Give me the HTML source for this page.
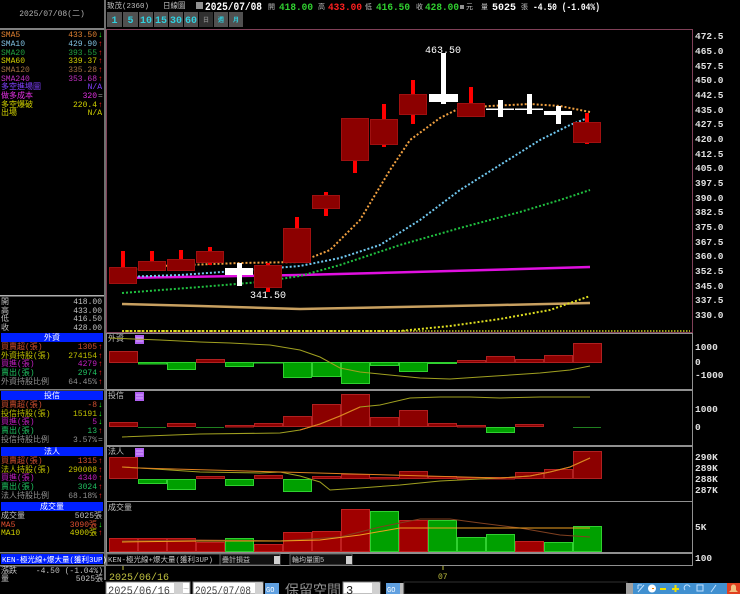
<!DOCTYPE html>
<html><head><meta charset="utf-8"><style>
html,body{margin:0;padding:0;background:#000;width:740px;height:594px;overflow:hidden}
svg{display:block}
text{font-family:"Liberation Mono","Noto Sans CJK TC",monospace}
.s{font-size:8px}
.ax{font-family:"Liberation Sans",sans-serif;font-size:9.5px;fill:#e0e0e0;font-weight:bold}
</style></head><body>
<svg width="740" height="594" viewBox="0 0 740 594" xmlns="http://www.w3.org/2000/svg">
<rect width="740" height="594" fill="#000"/>
<!-- left panel -->
<rect x="104" y="0" width="2" height="580" fill="#707070"/>
<rect x="0" y="28" width="104" height="2" fill="#808080"/>
<text x="52" y="16" class="s" fill="#b0b0b0" text-anchor="middle">2025/07/08(二)</text>
<g class="s">
<text x="1" y="37" fill="#e08030">SMA5</text><text x="97" y="37" fill="#e08030" text-anchor="end">433.50</text><text x="98" y="37" fill="#20ff20">↓</text>
<text x="1" y="46" fill="#80c0e0">SMA10</text><text x="97" y="46" fill="#80c0e0" text-anchor="end">429.90</text><text x="98" y="46" fill="#ff2020">↑</text>
<text x="1" y="55" fill="#20a040">SMA20</text><text x="97" y="55" fill="#20a040" text-anchor="end">393.55</text><text x="98" y="55" fill="#ff2020">↑</text>
<text x="1" y="63" fill="#d0d000">SMA60</text><text x="97" y="63" fill="#d0d000" text-anchor="end">339.37</text><text x="98" y="63" fill="#ff2020">↑</text>
<text x="1" y="72" fill="#a07040">SMA120</text><text x="97" y="72" fill="#a07040" text-anchor="end">335.28</text><text x="98" y="72" fill="#ff2020">↑</text>
<text x="1" y="81" fill="#c030c0">SMA240</text><text x="97" y="81" fill="#c030c0" text-anchor="end">353.68</text><text x="98" y="81" fill="#ff2020">↑</text>
<text x="1" y="89" fill="#8040ff">多空進場圖</text><text x="102" y="89" fill="#8040ff" text-anchor="end">N/A</text>
<text x="1" y="98" fill="#e030e0">做多成本</text><text x="97" y="98" fill="#e030e0" text-anchor="end">320</text><text x="98" y="98" fill="#909090">=</text>
<text x="1" y="107" fill="#d0d000">多空爆破</text><text x="97" y="107" fill="#d0d000" text-anchor="end">220.4</text><text x="98" y="107" fill="#ff2020">↑</text>
<text x="1" y="115" fill="#d0d000">出場</text><text x="102" y="115" fill="#d0d000" text-anchor="end">N/A</text>
</g>
<rect x="0" y="295" width="104" height="1.5" fill="#b0b0b0"/>
<g class="s" fill="#c0c0c0">
<text x="1" y="304">開</text><text x="102" y="304" text-anchor="end">418.00</text>
<text x="1" y="313">高</text><text x="102" y="313" text-anchor="end">433.00</text>
<text x="1" y="321">低</text><text x="102" y="321" text-anchor="end">416.50</text>
<text x="1" y="330">收</text><text x="102" y="330" text-anchor="end">428.00</text>
</g>
<g class="s">
<rect x="1" y="333" width="102" height="9" fill="#0020ff"/><text x="52" y="340" fill="#fff" text-anchor="middle">外資</text>
<text x="1" y="349" fill="#d05030">買賣超(張)</text><text x="97" y="349" fill="#d05030" text-anchor="end">1305</text><text x="98" y="349" fill="#ff2020">↑</text>
<text x="1" y="358" fill="#c0c000">外資持股(張)</text><text x="97" y="358" fill="#c0c000" text-anchor="end">274154</text><text x="98" y="358" fill="#ff2020">↑</text>
<text x="1" y="366" fill="#c020c0">買進(張)</text><text x="97" y="366" fill="#c020c0" text-anchor="end">4279</text><text x="98" y="366" fill="#ff2020">↑</text>
<text x="1" y="375" fill="#20c060">賣出(張)</text><text x="97" y="375" fill="#20c060" text-anchor="end">2974</text><text x="98" y="375" fill="#ff2020">↑</text>
<text x="1" y="384" fill="#909090">外資持股比例</text><text x="97" y="384" fill="#909090" text-anchor="end">64.45%</text><text x="98" y="384" fill="#ff2020">↑</text>
<rect x="0" y="389" width="104" height="1.5" fill="#808080"/>
<rect x="1" y="391" width="102" height="9" fill="#0020ff"/><text x="52" y="398" fill="#fff" text-anchor="middle">投信</text>
<text x="1" y="407" fill="#d05030">買賣超(張)</text><text x="97" y="407" fill="#d05030" text-anchor="end">-8</text><text x="98" y="407" fill="#20ff20">↓</text>
<text x="1" y="416" fill="#c0c000">投信持股(張)</text><text x="97" y="416" fill="#c0c000" text-anchor="end">15191</text><text x="98" y="416" fill="#20ff20">↓</text>
<text x="1" y="424" fill="#c020c0">買進(張)</text><text x="97" y="424" fill="#c020c0" text-anchor="end">5</text><text x="98" y="424" fill="#20ff20">↓</text>
<text x="1" y="433" fill="#20c060">賣出(張)</text><text x="97" y="433" fill="#20c060" text-anchor="end">13</text><text x="98" y="433" fill="#ff2020">↑</text>
<text x="1" y="442" fill="#909090">投信持股比例</text><text x="97" y="442" fill="#909090" text-anchor="end">3.57%</text><text x="98" y="442" fill="#909090">=</text>
<rect x="1" y="447" width="102" height="9" fill="#0020ff"/><text x="52" y="454" fill="#fff" text-anchor="middle">法人</text>
<text x="1" y="463" fill="#d05030">買賣超(張)</text><text x="97" y="463" fill="#d05030" text-anchor="end">1315</text><text x="98" y="463" fill="#ff2020">↑</text>
<text x="1" y="472" fill="#c0c000">法人持股(張)</text><text x="97" y="472" fill="#c0c000" text-anchor="end">290008</text><text x="98" y="472" fill="#ff2020">↑</text>
<text x="1" y="480" fill="#c020c0">買進(張)</text><text x="97" y="480" fill="#c020c0" text-anchor="end">4340</text><text x="98" y="480" fill="#ff2020">↑</text>
<text x="1" y="489" fill="#20c060">賣出(張)</text><text x="97" y="489" fill="#20c060" text-anchor="end">3024</text><text x="98" y="489" fill="#ff2020">↑</text>
<text x="1" y="498" fill="#909090">法人持股比例</text><text x="97" y="498" fill="#909090" text-anchor="end">68.18%</text><text x="98" y="498" fill="#ff2020">↑</text>
<rect x="1" y="502" width="102" height="9" fill="#0020ff"/><text x="52" y="509" fill="#fff" text-anchor="middle">成交量</text>
<text x="1" y="518" fill="#c0c0c0">成交量</text><text x="102" y="518" fill="#c0c0c0" text-anchor="end">5025張</text>
<text x="1" y="527" fill="#e05030">MA5</text><text x="97" y="527" fill="#e05030" text-anchor="end">3090張</text><text x="98" y="527" fill="#20ff20">↓</text>
<text x="1" y="535" fill="#d0d000">MA10</text><text x="97" y="535" fill="#d0d000" text-anchor="end">4900張</text><text x="98" y="535" fill="#ff2020">↑</text>
<rect x="0" y="552" width="104" height="1.5" fill="#808080"/>
<rect x="1" y="554" width="102" height="10" fill="#0020ff"/><text x="2" y="562" fill="#fff" font-size="7.5">KEN-極光線+爆大量(獲利3UP)</text>
<rect x="0" y="565" width="104" height="1.5" fill="#808080"/>
<text x="1" y="573" fill="#c0c0c0">漲跌</text><text x="103" y="573" fill="#c0c0c0" text-anchor="end">-4.50 (-1.04%)</text>
<text x="1" y="581" fill="#c0c0c0">量</text><text x="103" y="581" fill="#c0c0c0" text-anchor="end">5025張</text>
</g>

<!-- header -->
<g class="s">
<text x="107" y="8" fill="#c0c0c0" font-size="7.5">致茂(2360)</text>
<text x="163" y="8" fill="#c0c0c0" font-size="7.5">日線圖</text>
<rect x="196" y="2" width="7" height="7" fill="#909090"/>
</g>
<g font-family="Liberation Sans,sans-serif" font-weight="bold" font-size="10">
<text x="205" y="10" fill="#fff" font-size="11" textLength="57" lengthAdjust="spacingAndGlyphs">2025/07/08</text>
<text x="268" y="9" fill="#c0c0c0" font-size="7" font-weight="normal" font-family="Noto Sans CJK TC">開</text>
<text x="279" y="10" fill="#30d030" textLength="34" lengthAdjust="spacingAndGlyphs">418.00</text>
<text x="318" y="9" fill="#c0c0c0" font-size="7" font-weight="normal" font-family="Noto Sans CJK TC">高</text>
<text x="328" y="10" fill="#ff2020" textLength="34" lengthAdjust="spacingAndGlyphs">433.00</text>
<text x="365" y="9" fill="#c0c0c0" font-size="7" font-weight="normal" font-family="Noto Sans CJK TC">低</text>
<text x="376" y="10" fill="#30d030" textLength="34" lengthAdjust="spacingAndGlyphs">416.50</text>
<text x="416" y="9" fill="#c0c0c0" font-size="7" font-weight="normal" font-family="Noto Sans CJK TC">收</text>
<text x="425" y="10" fill="#30d030" textLength="34" lengthAdjust="spacingAndGlyphs">428.00</text>
<rect x="460" y="5" width="4" height="4" fill="#909090"/>
<text x="466" y="9" fill="#c0c0c0" font-size="7" font-weight="normal" font-family="Noto Sans CJK TC">元</text>
<text x="481" y="9" fill="#c0c0c0" font-size="7" font-weight="normal" font-family="Noto Sans CJK TC">量</text>
<text x="492" y="10" fill="#fff" textLength="24" lengthAdjust="spacingAndGlyphs">5025</text>
<text x="521" y="9" fill="#c0c0c0" font-size="7" font-weight="normal" font-family="Noto Sans CJK TC">張</text>
<text x="533" y="10" fill="#fff" textLength="67" lengthAdjust="spacingAndGlyphs">-4.50 (-1.04%)</text>
</g>
<g font-family="Liberation Serif,serif" font-weight="bold" font-size="10" fill="#30d0e0" text-anchor="middle">
<rect x="107" y="12" width="15" height="15" fill="#505050"/><text x="114.5" y="23">1</text>
<rect x="123" y="12" width="15" height="15" fill="#505050"/><text x="130.5" y="23">5</text>
<rect x="139" y="12" width="14" height="15" fill="#505050"/><text x="146" y="23">10</text>
<rect x="154" y="12" width="14" height="15" fill="#505050"/><text x="161" y="23">15</text>
<rect x="169" y="12" width="14" height="15" fill="#505050"/><text x="176" y="23">30</text>
<rect x="184" y="12" width="14" height="15" fill="#505050"/><text x="191" y="23">60</text>
<rect x="199" y="12" width="14" height="15" fill="#303030"/><text x="206" y="22" font-size="6" fill="#808080" font-family="Noto Sans CJK TC">日</text>
<rect x="214" y="12" width="14" height="15" fill="#505050"/><text x="221" y="22" font-size="6" font-family="Noto Sans CJK TC">週</text>
<rect x="229" y="12" width="14" height="15" fill="#505050"/><text x="236" y="22" font-size="6" font-family="Noto Sans CJK TC">月</text>
</g>

<g fill="none">
<rect x="106.5" y="29.5" width="586" height="303" stroke="#804058"/>
<rect x="106.5" y="333.5" width="586" height="56" stroke="#909090"/>
<rect x="106.5" y="390.5" width="586" height="55" stroke="#909090"/>
<rect x="106.5" y="446.5" width="586" height="55" stroke="#909090"/>
<rect x="106.5" y="501.5" width="586" height="51" stroke="#909090"/>
<rect x="106.5" y="553.5" width="586" height="12" stroke="#909090"/>
</g>

<g class="ax">
<text x="695" y="39">472.5</text><text x="695" y="54">465.0</text><text x="695" y="69">457.5</text><text x="695" y="83">450.0</text>
<text x="695" y="98">442.5</text><text x="695" y="113">435.0</text><text x="695" y="127">427.5</text><text x="695" y="142">420.0</text>
<text x="695" y="157">412.5</text><text x="695" y="171">405.0</text><text x="695" y="186">397.5</text><text x="695" y="201">390.0</text>
<text x="695" y="215">382.5</text><text x="695" y="230">375.0</text><text x="695" y="245">367.5</text><text x="695" y="259">360.0</text>
<text x="695" y="274">352.5</text><text x="695" y="289">345.0</text><text x="695" y="303">337.5</text><text x="695" y="318">330.0</text>
<text x="695" y="350">1000</text><text x="695" y="365">0</text><text x="695" y="378">-1000</text>
<text x="695" y="412">1000</text><text x="695" y="430">0</text>
<text x="695" y="460">290K</text><text x="695" y="471">289K</text><text x="695" y="482">288K</text><text x="695" y="493">287K</text>
<text x="695" y="530">5K</text>
<text x="695" y="561">100</text>
</g>

<g fill="none" stroke-width="2">
<polyline stroke="#c8a060" stroke-width="2.5" points="122,304 200,306 300,309 400,307 500,305 590,303"/>
<polyline stroke="#e010e0" stroke-width="2.5" points="122,278 300,275 450,271 590,267"/>
<polyline stroke="#e0e020" stroke-dasharray="2 2" points="122,331 400,331 450,326 500,319 550,310 590,296"/>
<polyline stroke="#d0d020" stroke-width="1.5" stroke-dasharray="1.5 1.5" points="122,331 690,331"/>
<polyline stroke="#20c040" stroke-dasharray="2 2" points="122,293 200,287 260,282 300,276 340,265 400,245 460,228 520,212 560,200 590,190"/>
<polyline stroke="#70c8f0" stroke-dasharray="2 2" points="122,277 180,275 250,270 300,266 340,258 380,245 420,220 460,190 500,165 540,140 570,125 590,117"/>
<polyline stroke="#f0a040" stroke-dasharray="2 2" points="122,272 160,266 240,263 300,262 330,250 360,220 390,170 410,140 440,118 460,108 490,106 530,104 560,106 590,112"/>
</g>

<g>
<g fill="#ff0000">
<rect x="121" y="251" width="4" height="32"/><rect x="150" y="251" width="4" height="19"/><rect x="179" y="250" width="4" height="20"/>
<rect x="208" y="247" width="4" height="18"/><rect x="266" y="263" width="4" height="29"/><rect x="295" y="217" width="4" height="46"/>
<rect x="324" y="192" width="4" height="24"/><rect x="353" y="118" width="4" height="55"/><rect x="382" y="104" width="4" height="43"/>
<rect x="411" y="80" width="4" height="44"/><rect x="469" y="87" width="4" height="29"/><rect x="585" y="113" width="4" height="31"/>
</g>
<g fill="#8c0000" stroke="#a01010">
<rect x="109.5" y="267.5" width="27" height="16"/><rect x="138.5" y="261.5" width="27" height="9"/><rect x="167.5" y="259.5" width="27" height="11"/>
<rect x="196.5" y="251.5" width="27" height="11"/><rect x="254.5" y="265.5" width="27" height="22"/><rect x="283.5" y="228.5" width="27" height="34"/>
<rect x="312.5" y="195.5" width="27" height="13"/><rect x="341.5" y="118.5" width="27" height="42"/><rect x="370.5" y="119.5" width="27" height="25"/>
<rect x="399.5" y="94.5" width="27" height="20"/><rect x="457.5" y="103.5" width="27" height="13"/><rect x="573.5" y="122.5" width="27" height="20"/>
</g>
<g fill="#ffffff">
<rect x="225" y="268" width="28" height="7"/><rect x="237" y="263" width="5" height="23"/>
<rect x="429" y="94" width="29" height="8"/><rect x="441" y="53" width="5" height="51"/>
<rect x="486" y="108.5" width="28" height="1.5"/><rect x="498" y="100" width="5" height="17"/>
<rect x="515" y="108.5" width="28" height="1.5"/><rect x="527" y="94" width="5" height="20"/>
<rect x="544" y="111" width="28" height="4"/><rect x="556" y="106" width="5" height="18"/>
</g>
<text x="443" y="53" fill="#fff" font-family="Liberation Sans,sans-serif" font-size="10" text-anchor="middle">463.50</text>
<text x="268" y="298" fill="#fff" font-family="Liberation Sans,sans-serif" font-size="10" text-anchor="middle">341.50</text>
</g>

<g class="s" fill="#c0c0c0">
<text x="108" y="341">外資</text><text x="108" y="398">投信</text><text x="108" y="454">法人</text><text x="108" y="510">成交量</text>
</g>
<g fill="#b060f0">
<rect x="135" y="335" width="9" height="9"/><rect x="135" y="392" width="9" height="9"/><rect x="135" y="448" width="9" height="9"/>
</g>
<g stroke="#e0c0ff" stroke-width="0.8">
<line x1="136" y1="338" x2="143" y2="338"/><line x1="136" y1="341" x2="143" y2="341"/>
<line x1="136" y1="395" x2="143" y2="395"/><line x1="136" y1="398" x2="143" y2="398"/>
<line x1="136" y1="451" x2="143" y2="451"/><line x1="136" y1="454" x2="143" y2="454"/>
</g>

<g stroke-width="1">
<g fill="#8c0000" stroke="#b02020">
<rect x="109.5" y="351.5" width="28" height="11"/><rect x="196.5" y="359.5" width="28" height="3"/>
<rect x="457.5" y="360.5" width="28" height="2"/><rect x="486.5" y="356.5" width="28" height="6"/><rect x="515.5" y="359.5" width="28" height="3"/>
<rect x="544.5" y="355.5" width="28" height="7"/><rect x="573.5" y="343.5" width="28" height="19"/>
</g>
<g fill="#00a000" stroke="#30d030">
<rect x="138.5" y="362.5" width="28" height="1.5"/><rect x="167.5" y="362.5" width="28" height="7"/><rect x="225.5" y="362.5" width="28" height="4"/>
<rect x="254.5" y="362.5" width="28" height="0.5"/><rect x="283.5" y="362.5" width="28" height="15"/><rect x="312.5" y="362.5" width="28" height="14"/>
<rect x="341.5" y="362.5" width="28" height="21"/><rect x="370.5" y="362.5" width="28" height="3"/><rect x="399.5" y="362.5" width="28" height="9"/>
<rect x="428.5" y="362.5" width="28" height="1"/>
</g>
<polyline fill="none" stroke="#a0a020" points="109,338 160,340 200,342 230,343 270,345 300,350 320,357 340,368 360,372 380,374 420,378 450,379 480,377 510,375 540,373 570,370 590,366"/>

<g fill="#8c0000" stroke="#b02020">
<rect x="109.5" y="422.5" width="28" height="4"/><rect x="167.5" y="423.5" width="28" height="3"/><rect x="225.5" y="425.5" width="28" height="1.5"/>
<rect x="254.5" y="423.5" width="28" height="3"/><rect x="283.5" y="416.5" width="28" height="10"/><rect x="312.5" y="404.5" width="28" height="22"/>
<rect x="341.5" y="394.5" width="28" height="32"/><rect x="370.5" y="417.5" width="28" height="9"/><rect x="399.5" y="410.5" width="28" height="16"/>
<rect x="428.5" y="423.5" width="28" height="3"/><rect x="457.5" y="425.5" width="28" height="1.5"/><rect x="515.5" y="424.5" width="28" height="2"/>
</g>
<g fill="#00a000" stroke="#30d030">
<rect x="486.5" y="427.5" width="28" height="5"/>
</g>
<g stroke="#208020"><line x1="138" y1="427.5" x2="166" y2="427.5"/><line x1="196" y1="427.5" x2="224" y2="427.5"/><line x1="573" y1="427.5" x2="601" y2="427.5"/></g>
<polyline fill="none" stroke="#a0a020" points="122,437 200,434 280,433 300,430 320,424 340,416 360,407 380,405 410,398 440,397 470,397 500,398 540,397 590,397"/>
<polyline fill="none" stroke="#e08020" points="300,430 320,424 340,416 360,407"/>

<g fill="#8c0000" stroke="#b02020">
<rect x="109.5" y="457.5" width="28" height="21"/><rect x="196.5" y="476.5" width="28" height="2"/><rect x="254.5" y="475.5" width="28" height="3"/>
<rect x="312.5" y="476.5" width="28" height="2"/><rect x="341.5" y="474.5" width="28" height="4"/><rect x="370.5" y="477.5" width="28" height="1.5"/>
<rect x="399.5" y="471.5" width="28" height="7"/><rect x="428.5" y="476.5" width="28" height="2"/><rect x="457.5" y="477.5" width="28" height="1.5"/>
<rect x="486.5" y="477.5" width="28" height="1.5"/><rect x="515.5" y="472.5" width="28" height="6"/><rect x="544.5" y="469.5" width="28" height="9"/>
<rect x="573.5" y="451.5" width="28" height="27"/>
</g>
<g fill="#00a000" stroke="#30d030">
<rect x="138.5" y="479.5" width="28" height="4"/><rect x="167.5" y="479.5" width="28" height="10"/><rect x="225.5" y="479.5" width="28" height="6"/>
<rect x="283.5" y="479.5" width="28" height="12"/>
</g>
<polyline fill="none" stroke="#a0a020" points="122,467 140,468 200,472 260,473 280,472 300,476 320,482 330,490 360,488 400,485 440,481 500,478 530,476 550,472 570,467 590,458"/>
<polyline fill="none" stroke="#e08020" points="122,467 138,468 500,478 530,476 550,472 570,467 590,458"/>

<g fill="#a00000" stroke="#c02020">
<rect x="109.5" y="538.5" width="28" height="13"/><rect x="138.5" y="538.5" width="28" height="13"/><rect x="167.5" y="538.5" width="28" height="13"/>
<rect x="196.5" y="542.5" width="28" height="9"/><rect x="254.5" y="544.5" width="28" height="7"/><rect x="283.5" y="532.5" width="28" height="19"/>
<rect x="312.5" y="531.5" width="28" height="20"/><rect x="341.5" y="509.5" width="28" height="42"/><rect x="399.5" y="520.5" width="28" height="31"/>
<rect x="515.5" y="541.5" width="28" height="10"/>
</g>
<g fill="#00a000" stroke="#30d030">
<rect x="225.5" y="538.5" width="28" height="13"/><rect x="370.5" y="511.5" width="28" height="40"/><rect x="428.5" y="520.5" width="28" height="31"/>
<rect x="457.5" y="537.5" width="28" height="14"/><rect x="486.5" y="534.5" width="28" height="17"/><rect x="544.5" y="542.5" width="28" height="9"/>
<rect x="573.5" y="526.5" width="28" height="25"/>
</g>
<polyline fill="none" stroke="#804020" points="122,541 200,540 280,541 340,537 380,527 420,519 450,519 480,523 520,528 560,535 590,537"/>
<polyline fill="none" stroke="#f0a020" points="122,542 200,541 280,541 320,540 360,535 400,528 440,528 480,528 590,528"/>
</g>

<g class="s">
<rect x="107" y="554" width="113" height="11" fill="#000" stroke="#606060"/>
<text x="108" y="562" fill="#c0c0c0" font-size="7.5">KEN-極光線+爆大量(獲利3UP)</text>
<rect x="220" y="554" width="60" height="11" fill="#101010" stroke="#606060"/><text x="222" y="562" fill="#c0c0c0" font-size="7">疊計損益</text>
<rect x="274" y="556" width="6" height="8" fill="#d0d0d0"/>
<rect x="290" y="554" width="62" height="11" fill="#101010" stroke="#606060"/><text x="292" y="562" fill="#c0c0c0" font-size="7">輪均量圖5</text>
<rect x="346" y="556" width="6" height="8" fill="#d0d0d0"/>
</g>
<line x1="123" y1="566" x2="123" y2="570" stroke="#c0c040"/>
<line x1="443" y1="566" x2="443" y2="570" stroke="#c0c040"/>
<text x="109" y="580" fill="#c0c040" font-family="Liberation Sans,sans-serif" font-size="10">2025/06/16</text>
<text x="438" y="579" fill="#c0c040" font-family="Liberation Sans,sans-serif" font-size="8">07</text>

<rect x="106" y="582" width="84" height="12" fill="#fff" stroke="#808080"/>
<text x="108" y="594" font-family="Liberation Serif,serif" font-size="11" fill="#404040" textLength="62" lengthAdjust="spacingAndGlyphs">2025/06/16</text>
<rect x="174" y="583" width="9" height="11" fill="#d0d0d0"/>
<text x="183" y="592" fill="#c0c0c0" font-family="Liberation Sans,sans-serif" font-size="10">~</text>
<rect x="193" y="582" width="70" height="12" fill="#fff" stroke="#808080"/>
<text x="195" y="594" font-family="Liberation Serif,serif" font-size="11" fill="#404040" textLength="56" lengthAdjust="spacingAndGlyphs">2025/07/08</text>
<rect x="255" y="583" width="8" height="11" fill="#d0d0d0"/>
<rect x="265" y="583" width="14" height="11" fill="#60a0e0"/><text x="266" y="592" font-size="7" fill="#fff" font-family="Liberation Sans,sans-serif">GO</text>
<text x="285" y="595" fill="#909090" font-family="Noto Sans CJK TC,sans-serif" font-size="14">保留空間</text>
<rect x="343" y="582" width="37" height="12" fill="#fff" stroke="#808080"/>
<text x="346" y="594" font-family="Liberation Serif,serif" font-size="12" fill="#202020">3</text>
<rect x="372" y="583" width="8" height="11" fill="#d0d0d0"/>
<rect x="386" y="583" width="14" height="11" fill="#60a0e0"/><text x="387" y="592" font-size="7" fill="#fff" font-family="Liberation Sans,sans-serif">GO</text>
<rect x="400" y="583" width="4" height="11" fill="#c0c0c0"/>
<rect x="404" y="582" width="223" height="12" fill="#000" stroke="#303030"/>
<rect x="626" y="583" width="7" height="11" fill="#a0a0a0"/>
<rect x="633" y="583" width="94" height="11" fill="#4090d0"/>
<circle cx="652" cy="588.5" r="4" fill="#fff"/><line x1="652" y1="588.5" x2="654" y2="588.5" stroke="#f08000"/>
<rect x="660" y="588" width="6" height="2" fill="#f0e000"/><rect x="672" y="588" width="7" height="2" fill="#f0e000"/><rect x="674.5" y="585" width="2" height="7" fill="#f0e000"/>
<path d="M638 592 L644 585 M638 585 h4 M638 585 v4" stroke="#c0e0ff" fill="none"/>
<path d="M685 590 a3 3 0 1 1 5 -3 M697 585 h6 v6 h-6 z M711 592 l5 -7" stroke="#c0e0ff" fill="none"/>
<rect x="727" y="583" width="13" height="11" fill="#e04020"/><path d="M729 592 h9 l-2 -2 v-3 a2.5 2.5 0 0 0 -5 0 v3 z" fill="#f0c080"/>
</svg>
</body></html>
